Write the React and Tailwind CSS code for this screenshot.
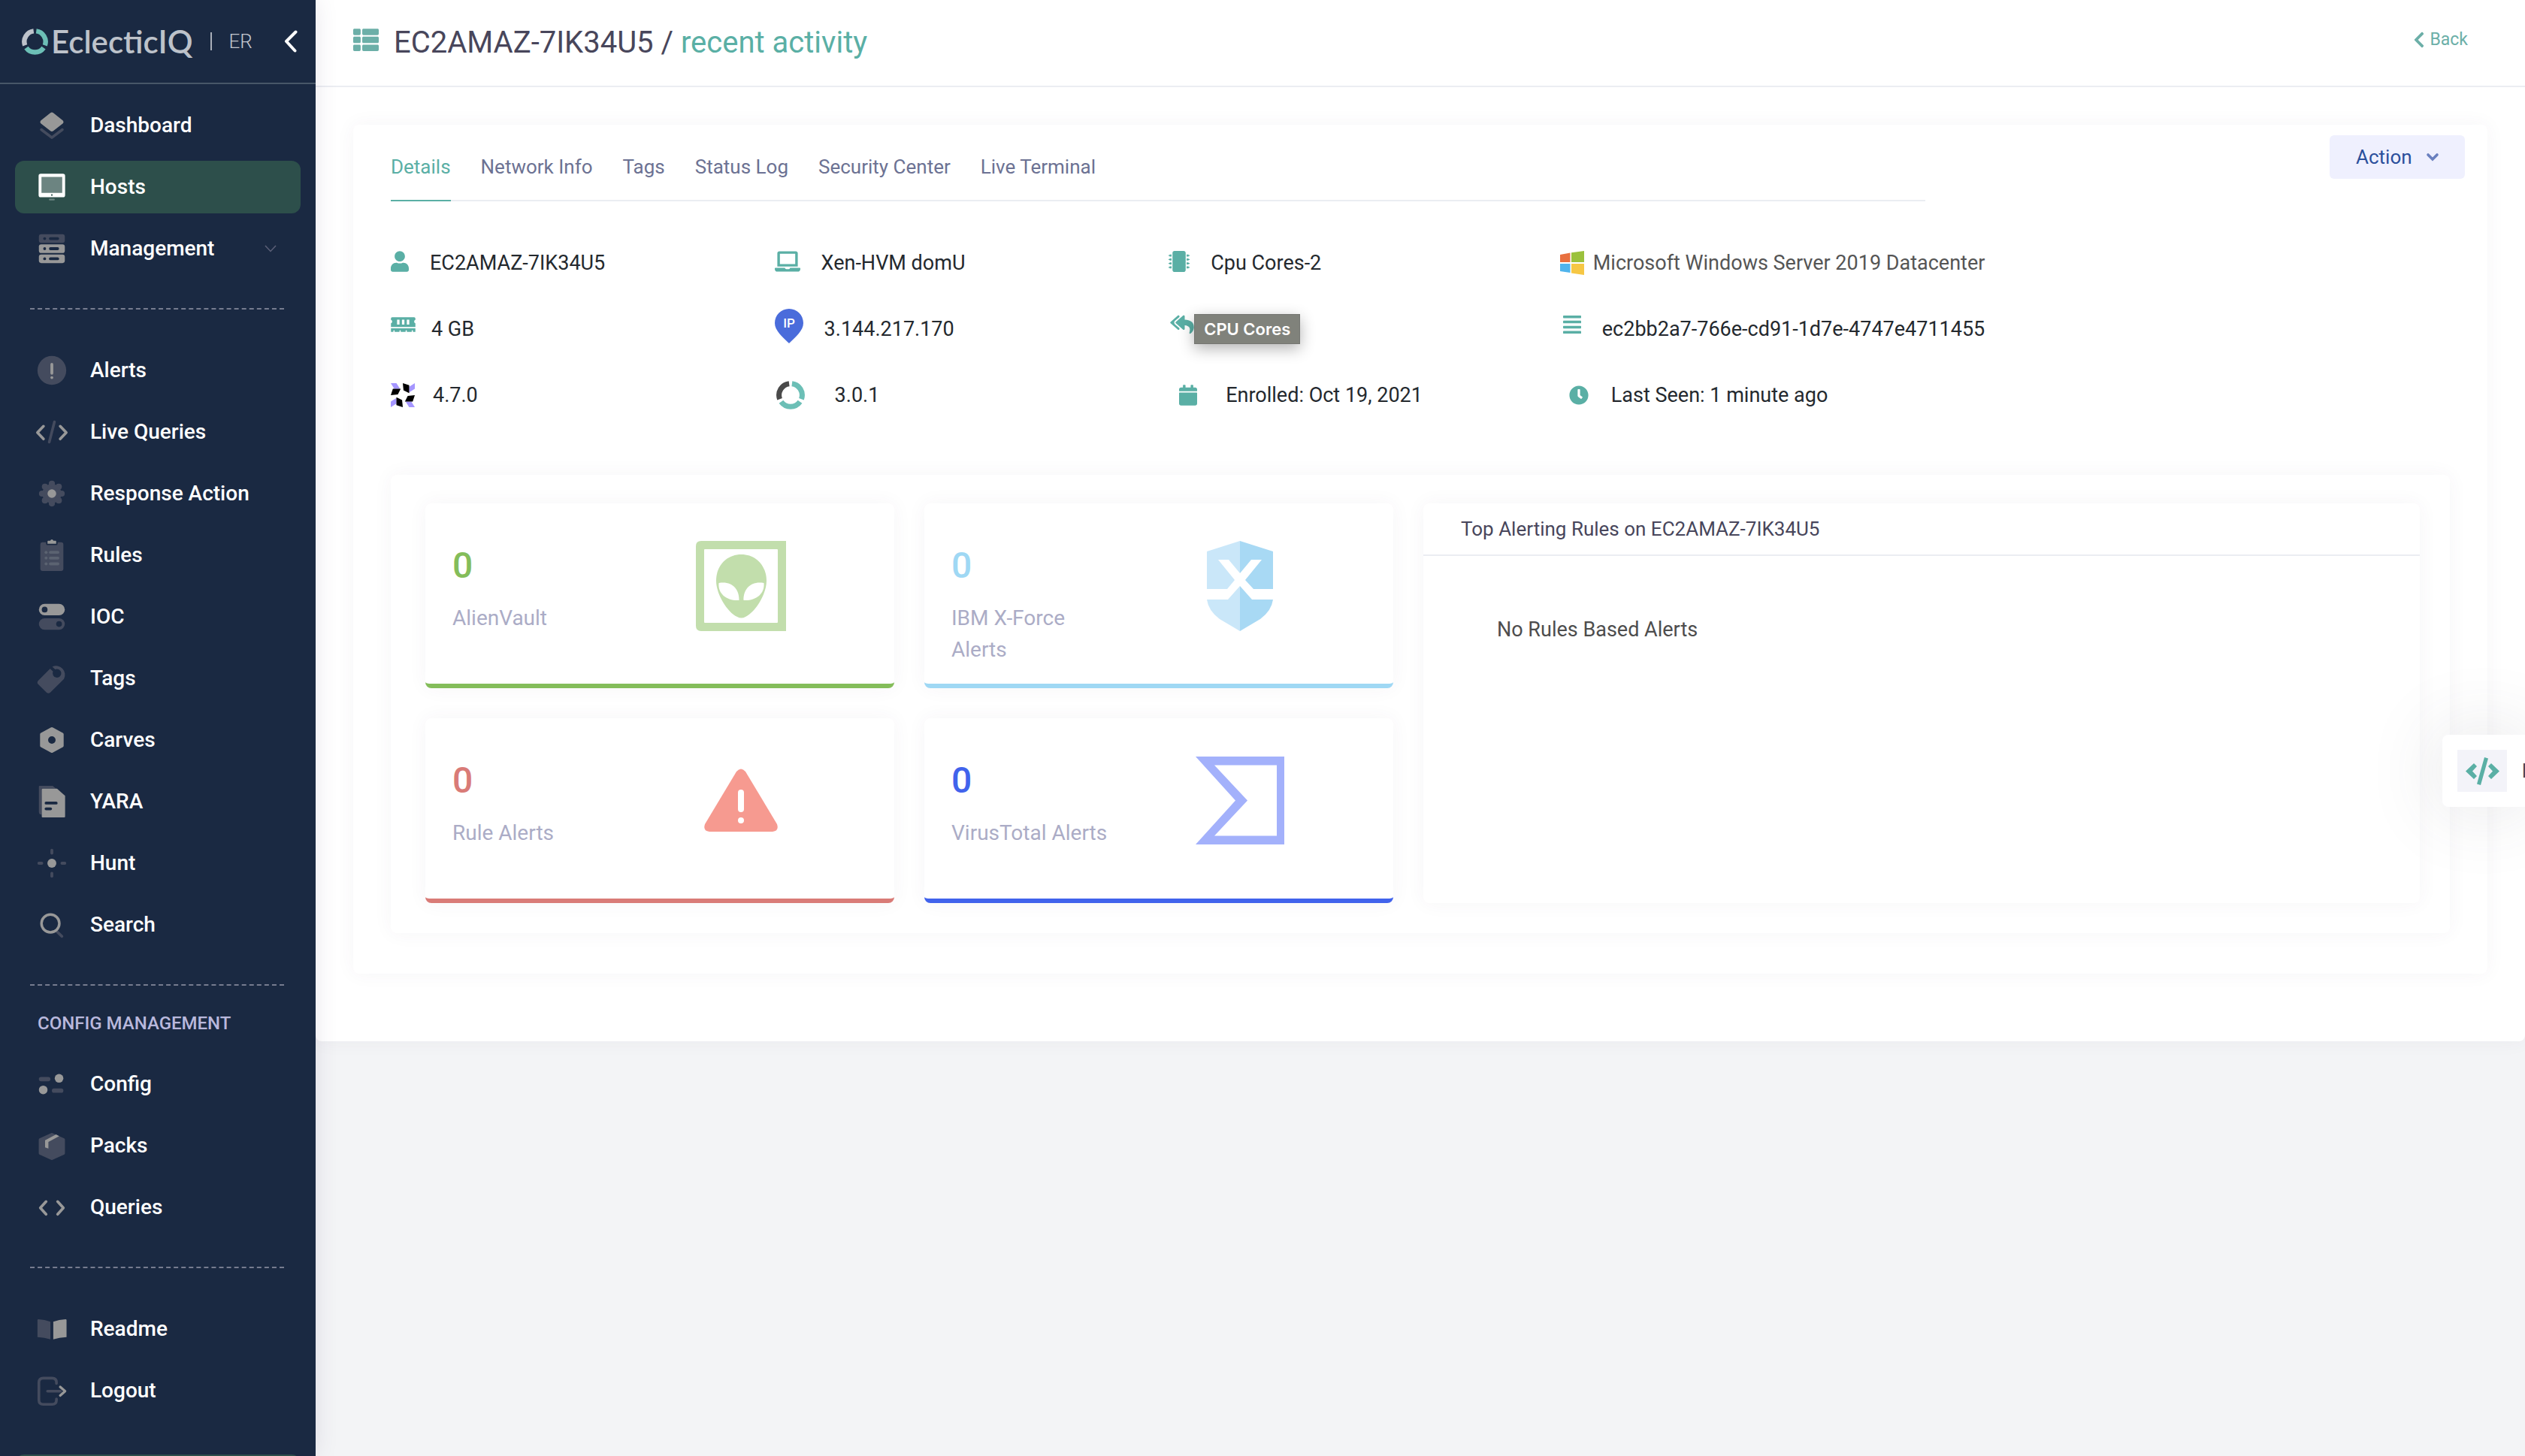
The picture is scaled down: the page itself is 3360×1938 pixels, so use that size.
import React from "react";
import {
  FaUser,
  FaLaptop,
  FaMicrochip,
  FaMemory,
  FaReplyAll,
  FaAlignJustify,
  FaCalendar,
  FaClock,
  FaThList,
  FaChevronLeft,
} from "react-icons/fa";

const G = "#989898";
const D = "#444b5e";
const BG = "#1a2942";

/* ---------- sidebar icons (24 unit grid) ---------- */
const icons = {
  dashboard: (
    <>
      <path d="M11 3.2Q12 2.5 13 3.2L19.7 8.6Q20.6 9.6 19.7 10.6L13 15.8Q12 16.6 11 15.8L4.3 10.6Q3.4 9.6 4.3 8.6Z" fill={G} />
      <path d="M4.7 14.9L12 20.4L19.3 14.9" fill="none" stroke={D} strokeWidth="1.9" strokeLinecap="round" strokeLinejoin="round" />
    </>
  ),
  hosts: (
    <>
      <rect x="3.8" y="3.8" width="16.4" height="13.2" fill="#fff" fillOpacity=".3" />
      <path fillRule="evenodd" fill="#fff" d="M4.3 2.8H19.7Q21.2 2.8 21.2 4.3V17.6Q21.2 19.1 19.7 19.1H4.3Q2.8 19.1 2.8 17.6V4.3Q2.8 2.8 4.3 2.8ZM4.8 4.9V16.1H19.2V4.9Z" />
      <circle cx="12" cy="17.5" r=".6" fill="#2d4f4b" />
      <rect x="10" y="20.1" width="4" height="1.1" rx=".5" fill="#fff" fillOpacity=".3" />
    </>
  ),
  management: (
    <>
      {[2, 9, 16].map((y, i) => (
        <g key={y}>
          <rect x="3" y={y} width="18" height="6" rx="1.6" fill={i ? G : D} />
          <circle cx="7" cy={y + 3} r="1" fill={BG} />
          <rect x="10" y={y + 2} width="7" height="2" rx="1" fill={BG} />
        </g>
      ))}
    </>
  ),
  alerts: (
    <>
      <circle cx="12" cy="12" r="10" fill={D} />
      <rect x="11" y="6.8" width="2" height="8.2" rx="1" fill={G} />
      <rect x="11" y="16" width="2" height="2" rx="1" fill={G} />
    </>
  ),
  live: (
    <>
      <path d="M6.2 8L2 12.4L6.2 16.8M17.8 8L22 12.4L17.8 16.8" fill="none" stroke={G} strokeWidth="1.9" strokeLinecap="round" strokeLinejoin="round" />
      <path d="M13.8 5L10.2 19" stroke={D} strokeWidth="1.9" strokeLinecap="round" />
    </>
  ),
  response: (
    <>
      <circle cx="12" cy="12" r="6.6" fill={D} />
      {[[12, 5.2], [12, 18.8], [5.2, 12], [18.8, 12], [7.2, 7.2], [16.8, 7.2], [7.2, 16.8], [16.8, 16.8]].map(([x, y]) => (
        <circle key={x + "-" + y} cx={x} cy={y} r="2.15" fill={D} />
      ))}
      <circle cx="12" cy="12" r="3" fill={G} />
    </>
  ),
  rules: (
    <>
      <path d="M5.6 3H8V4Q8 5 9 5H15Q16 5 16 4V3H18.4Q20 3 20 4.6V21.4Q20 23 18.4 23H5.6Q4 23 4 21.4V4.6Q4 3 5.6 3Z" fill={D} />
      <path d="M9 2.4Q9 1.9 9.5 1.9H10.9Q11.2 1 12 1Q12.8 1 13.1 1.9H14.5Q15 1.9 15 2.4V4.1H9Z" fill={G} />
      {[10, 14, 18].map((y) => (
        <g key={y} fill="#5b6371">
          <circle cx="8" cy={y} r="1.05" />
          <rect x="10" y={y - 1} width="7.2" height="2" rx="1" />
        </g>
      ))}
    </>
  ),
  ioc: (
    <>
      <rect x="3" y="3" width="18" height="8" rx="4" fill={G} />
      <circle cx="7" cy="7" r="2" fill={BG} />
      <rect x="3" y="13" width="18" height="8" rx="4" fill={D} />
      <circle cx="17" cy="17" r="2" fill={BG} />
    </>
  ),
  tags: (
    <path d="M12.3 3.9A6.2 6.2 0 0 1 20.4 12.4L10.9 21.8Q9.6 22.9 8.3 21.8L2.5 16Q1.4 14.8 2.5 13.5L10.8 5.2L12.8 7.2A3 3 0 1 0 14.3 5.7Z" fill={D} />
  ),
  carves: (
    <path fillRule="evenodd" d="M11.4 3.3Q12 3 12.6 3.3L19.8 7.2Q20.2 7.5 20.2 8V16Q20.2 16.5 19.8 16.8L12.6 20.7Q12 21 11.4 20.7L4.2 16.8Q3.8 16.5 3.8 16V8Q3.8 7.5 4.2 7.2ZM12 9.4A2.6 2.6 0 1 0 12 14.6A2.6 2.6 0 1 0 12 9.4Z" fill={G} />
  ),
  yara: (
    <>
      <path d="M3 1.6Q3 1 3.6 1H12.6L15 3H5V21Q3 21 3 19Z" fill={D} />
      <path d="M5 3.6Q5 3 5.6 3H15.6L21.2 7.9V22.4Q21.2 23 20.6 23H5.6Q5 23 5 22.4Z" fill={G} />
      <rect x="7" y="12" width="9" height="2" rx="1" fill={BG} />
      <rect x="7" y="16" width="5.1" height="2" rx="1" fill={BG} />
    </>
  ),
  hunt: (
    <>
      <circle cx="12" cy="12" r="3.1" fill={G} />
      <g fill={D}>
        <rect x="11" y="2" width="2" height="4" rx="1" />
        <rect x="11" y="18" width="2" height="4" rx="1" />
        <rect x="2" y="11" width="4" height="2" rx="1" />
        <rect x="18" y="11" width="4" height="2" rx="1" />
      </g>
    </>
  ),
  search: (
    <>
      <path d="M15.6 16.8L19 20" stroke={D} strokeWidth="1.9" strokeLinecap="round" />
      <circle cx="11" cy="11" r="6.2" fill="none" stroke={G} strokeWidth="1.8" />
    </>
  ),
  config: (
    <>
      <circle cx="17" cy="8" r="3" fill={G} />
      <circle cx="6" cy="16" r="3" fill={G} />
      <rect x="3" y="7" width="8" height="3" rx="1.5" fill={D} />
      <rect x="12" y="15" width="8" height="3" rx="1.5" fill={D} />
    </>
  ),
  packs: (
    <>
      <path d="M11.5 3.2Q12 3 12.5 3.2L20.6 6.9Q21.1 7.2 21.1 7.8V17.2Q21.1 17.8 20.6 18.1L12.5 21.8Q12 22 11.5 21.8L3.4 18.1Q2.9 17.8 2.9 17.2V7.8Q2.9 7.2 3.4 6.9Z" fill={D} />
      <path d="M14.9 4.2L7.3 8.2V13.2L9.6 13.9V9.4L17.1 5.3Z" fill={G} />
    </>
  ),
  queries: (
    <path d="M8 8L4 12.4L8 16.8M16 8L20 12.4L16 16.8" fill="none" stroke={G} strokeWidth="1.9" strokeLinecap="round" strokeLinejoin="round" />
  ),
  readme: (
    <>
      <path d="M2 5.8Q2 5.2 2.7 5.2Q7 5.4 11 6.9V19.2Q7 17.8 2 17.6Z" fill={D} />
      <path d="M22.2 5.8Q22.2 5.2 21.5 5.2Q17 5.4 13 6.9V19.2Q17 17.8 22.2 17.6Z" fill={G} />
    </>
  ),
  logout: (
    <>
      <path d="M15.2 7V6.3Q15.2 3.3 12.2 3.3H6Q3 3.3 3 6.3V18.5Q3 21.5 6 21.5H12.2Q15.2 21.5 15.2 18.5V17.8M9 12.4H18" fill="none" stroke={D} strokeWidth="1.9" strokeLinecap="round" />
      <path d="M17.8 9.4L21.2 12.4L17.8 15.4" fill="none" stroke={G} strokeWidth="1.7" strokeLinecap="round" strokeLinejoin="round" />
    </>
  ),
};

function NavItem({ icon, label, active, chevron }) {
  return (
    <li>
      <a
        href="#"
        className={
          "mx-5 flex h-[70px] items-center gap-7 rounded-xl pl-[26px] pr-8 text-[28px] font-medium leading-10 text-white " +
          (active ? "bg-[#2d4f4b]" : "")
        }
      >
        <svg viewBox="0 0 24 24" className="size-[46px] shrink-0" aria-hidden="true">
          {icons[icon]}
        </svg>
        <span className="flex-1">{label}</span>
        {chevron && (
          <svg viewBox="0 0 16 10" className="h-[10px] w-4" aria-hidden="true">
            <path d="M1 1L8 8.5L15 1" fill="none" stroke="#5c6078" strokeWidth="1.5" />
          </svg>
        )}
      </a>
    </li>
  );
}

function Divider() {
  return <div className="ml-10 mr-[42px] mt-11 border-t-2 border-dashed border-[#767c8f]" />;
}

function Ring({ className, dark }) {
  return (
    <svg viewBox="0 0 40 40" className={className} aria-hidden="true">
      <g fill="none" strokeWidth="7.4">
        <path d="M22 3.9A16.2 16.2 0 0 1 35.2 25.5" stroke="#6cbfb6" />
        <path d="M33.2 29.2A16.2 16.2 0 0 1 6.8 29.2" stroke="#6cbfb6" />
        <path d="M4.8 25.5A16.2 16.2 0 0 1 18 3.9" stroke={dark} />
      </g>
    </svg>
  );
}

function Sidebar() {
  return (
    <aside className="relative z-10 h-screen w-[420px] shrink-0 overflow-hidden bg-[#1a2942] shadow-[0_0_28px_rgba(82,63,105,0.13)]">
      <div className="flex h-28 items-center border-b-2 border-[#485768] pl-[29px] pr-6">
        <Ring className="size-[35px]" dark="#bdc2ca" />
        <span className="ml-1 font-[Lato,sans-serif] text-[42px] font-semibold leading-none text-[#bdc2ca]">EclecticIQ</span>
        <span className="ml-6 h-6 w-0.5 bg-[#a9afb9]" />
        <span className="ml-[22px] text-[26px] font-light leading-none text-[#c3c7cf]">ER</span>
        <button type="button" aria-label="Collapse menu" className="ml-auto">
          <svg viewBox="0 0 18 30" className="h-[30px] w-[18px]">
            <path d="M15.5 2.5L3 15L14.5 27.5" fill="none" stroke="#fff" strokeWidth="4" strokeLinecap="round" strokeLinejoin="round" />
          </svg>
        </button>
      </div>
      <nav>
        <ul className="mt-5 flex flex-col gap-3">
          <NavItem icon="dashboard" label="Dashboard" />
          <NavItem icon="hosts" label="Hosts" active />
          <NavItem icon="management" label="Management" chevron />
        </ul>
        <Divider />
        <ul className="mt-[46px] flex flex-col gap-3">
          <NavItem icon="alerts" label="Alerts" />
          <NavItem icon="live" label="Live Queries" />
          <NavItem icon="response" label="Response Action" />
          <NavItem icon="rules" label="Rules" />
          <NavItem icon="ioc" label="IOC" />
          <NavItem icon="tags" label="Tags" />
          <NavItem icon="carves" label="Carves" />
          <NavItem icon="yara" label="YARA" />
          <NavItem icon="hunt" label="Hunt" />
          <NavItem icon="search" label="Search" />
        </ul>
        <Divider />
        <h2 className="ml-[50px] mt-[30px] text-[24px] font-medium leading-10 text-[#b9b8dc]">CONFIG MANAGEMENT</h2>
        <ul className="mt-[26px] flex flex-col gap-3">
          <NavItem icon="config" label="Config" />
          <NavItem icon="packs" label="Packs" />
          <NavItem icon="queries" label="Queries" />
        </ul>
        <Divider />
        <ul className="mt-[46px] flex flex-col gap-3">
          <NavItem icon="readme" label="Readme" />
          <NavItem icon="logout" label="Logout" />
        </ul>
      </nav>
      <div className="mx-5 mt-[50px] h-[70px] rounded-xl bg-[#2d4f4b]" />
    </aside>
  );
}

/* ---------- host details ---------- */
function Detail({ lead, icon, children, muted }) {
  return (
    <div className="relative flex h-[88px] items-center">
      <span className={"flex shrink-0 items-center text-[#5aafa5] " + lead}>{icon}</span>
      <span className={"whitespace-nowrap " + (muted ? "text-[#555]" : "text-[#24292e]")}>{children}</span>
    </div>
  );
}

function IpPin() {
  return (
    <svg viewBox="0 0 38 46" className="h-[46px] w-[38px] shrink-0" aria-label="IP">
      <path d="M19 0C29.500 0 38 8.500 38 19C38 29 28 37 19 46C10 37 0 29 0 19C0 8.500 8.500 0 19 0Z" fill="#4a6cdb" />
      <text x="19" y="25" textAnchor="middle" fontFamily="Roboto, sans-serif" fontSize="17" fontWeight="500" fill="#fff">IP</text>
    </svg>
  );
}

function OsqueryMark() {
  const blade = (
    <>
      <path d="M0 0H8L13 8H5Z" fill="#a596ff" />
      <path d="M3 8H14L10 16L0 17Z" fill="#000" />
    </>
  );
  return (
    <svg viewBox="0 0 34 34" className="size-8 shrink-0" aria-hidden="true">
      {blade}
      <g transform="rotate(90 17 17)">{blade}</g>
      <g transform="rotate(180 17 17)">{blade}</g>
      <g transform="rotate(270 17 17)">{blade}</g>
    </svg>
  );
}

function WindowsMark() {
  return (
    <svg viewBox="0 0 32 32" className="size-8 shrink-0" aria-hidden="true">
      <path d="M0 5L13.500 2.500V15H0Z" fill="#e8703f" />
      <path d="M15 2.200L32 0V15H15Z" fill="#9bc13c" />
      <path d="M0 17H13.500V29L0 27Z" fill="#50b4ec" />
      <path d="M15 17H32V32L15 29.500Z" fill="#f6c744" />
    </svg>
  );
}

function Details() {
  return (
    <div className="mt-[38px] grid w-[74%] grid-cols-4 text-[27px] leading-10">
      <Detail lead="w-[52px] pb-1" icon={<FaUser className="h-7 w-6" />}>EC2AMAZ-7IK34U5</Detail>
      <Detail lead="w-[62px] pb-1" icon={<FaLaptop className="h-7 w-[34px]" />}>Xen-HVM domU</Detail>
      <Detail lead="w-[70px] pb-1 pl-[14px]" icon={<FaMicrochip className="size-7" />}>Cpu Cores-2</Detail>
      <Detail lead="w-[68px] pl-6" icon={<WindowsMark />} muted>Microsoft Windows Server 2019 Datacenter</Detail>

      <Detail lead="w-[54px] pb-3" icon={<FaMemory className="h-[26px] w-[33px]" />}>4 GB</Detail>
      <Detail lead="w-[66px] pb-2" icon={<IpPin />}>3.144.217.170</Detail>
      <div className="relative flex h-[88px] items-center pb-3 pl-4 text-[#5aafa5]">
        <FaReplyAll className="h-7 w-8" />
        <span
          role="tooltip"
          className="absolute left-12 top-6 border border-[#757672] bg-[#80827b] px-3 font-[Inter,sans-serif] text-[22px] font-semibold leading-[38px] text-white shadow-[0_6px_20px_rgba(0,0,0,0.3)]"
        >
          CPU Cores
        </span>
      </div>
      <Detail lead="w-20 pb-3 pl-7" icon={<FaAlignJustify className="h-7 w-6" />}>ec2bb2a7-766e-cd91-1d7e-4747e4711455</Detail>

      <Detail lead="w-14" icon={<OsqueryMark />}>4.7.0</Detail>
      <Detail lead="w-20 pl-0.5" icon={<Ring className="size-[38px]" dark="#4a4a4a" />}>3.0.1</Detail>
      <Detail lead="w-[90px] pl-7" icon={<FaCalendar className="h-7 w-6" />}>Enrolled: Oct 19, 2021</Detail>
      <Detail lead="w-[92px] pl-9" icon={<FaClock className="size-[26px]" />}>Last Seen: 1 minute ago</Detail>
    </div>
  );
}

/* ---------- alert cards ---------- */
function AlienIcon() {
  return (
    <svg viewBox="0 0 120 120" className="size-[120px]" aria-hidden="true">
      <path fillRule="evenodd" fill="#c2deac" d="M7 0H120V120H7Q0 120 0 113V7Q0 0 7 0ZM12 11Q11 11 11 12V108Q11 109 12 109H108Q109 109 109 108V12Q109 11 108 11Z" />
      <path fill="#c2deac" d="M60.500 18C80 18 94 33 94 53C94 71 79 95 66 101Q60.500 104 55 101C42 95 27 71 27 53C27 33 41 18 60.500 18Z" />
      <path fill="#fff" d="M30.500 56C48 53 58 64 57.500 79C42 80 29 71 30.500 56ZM90.500 56C73 53 63 64 63.500 79C79 80 92 71 90.500 56Z" />
    </svg>
  );
}

function XForceIcon() {
  return (
    <svg viewBox="0 0 120 120" className="size-[120px]" aria-hidden="true">
      <path d="M60 0V120L33 104Q18 93 16 78V14Z" fill="#cae7f9" />
      <path d="M60 0V120L87 104Q102 93 104 78V14Z" fill="#a8d9f4" />
      <path fill="#fff" d="M31 25H45L60 43L75 25H89L67 52L78 64H104V78H76L60 60L44 78H16V64H43L53 52Z" />
    </svg>
  );
}

function RuleIcon() {
  return (
    <svg viewBox="0 0 120 120" className="size-[120px]" aria-hidden="true">
      <path d="M54 21Q60 14 66 21L108 91Q111 100 102 101H18Q9 100 12 91Z" fill="#f69a90" />
      <rect x="56" y="45" width="8" height="30" rx="4" fill="#fff" />
      <circle cx="60" cy="86" r="4" fill="#fff" />
    </svg>
  );
}

function VirusTotalIcon() {
  return (
    <svg viewBox="0 0 120 120" className="size-[120px]" aria-hidden="true">
      <path fillRule="evenodd" fill="#a3b1fb" d="M1 1H119V118H1L54 59.500ZM26 12.500L70 59.500L26 106.500H109V12.500Z" />
    </svg>
  );
}

function StatCard({ value, label, tone, edge, icon }) {
  return (
    <div className={"flex h-[246px] rounded-lg border-b-[6px] bg-white pl-9 pt-[50px] shadow-[0_0_26px_rgba(82,63,105,0.05)] " + edge}>
      <div className="w-56 shrink-0">
        <p className={"text-[48px] font-medium leading-[66px] " + tone}>{value}</p>
        <p className="mt-4 text-[28px] leading-[42px] text-[#abacc6]">{label}</p>
      </div>
      <div className="ml-[100px]">{icon}</div>
    </div>
  );
}

function Alerts() {
  return (
    <section className="mx-[50px] mt-[62px] grid grid-cols-[1288fr_1326fr] gap-10 rounded-lg bg-white pb-10 pl-[46px] pr-10 pt-[38px] shadow-[0_0_26px_rgba(82,63,105,0.05)]">
      <div className="grid grid-cols-2 gap-10">
        <StatCard value="0" label="AlienVault" tone="text-[#84bd5a]" edge="border-[#84bd5a]" icon={<AlienIcon />} />
        <StatCard value="0" label="IBM X-Force Alerts" tone="text-[#9fd8f4]" edge="border-[#9fd8f4]" icon={<XForceIcon />} />
        <StatCard value="0" label="Rule Alerts" tone="text-[#d97b77]" edge="border-[#d97b77]" icon={<RuleIcon />} />
        <StatCard value="0" label="VirusTotal Alerts" tone="text-[#4163ec]" edge="border-[#4163ec]" icon={<VirusTotalIcon />} />
      </div>
      <div className="rounded-lg bg-white shadow-[0_0_26px_rgba(82,63,105,0.05)]">
        <h2 className="border-b-2 border-[#ebedf2] py-[14px] pl-[50px] text-[26px] leading-10 text-[#48465b]">
          Top Alerting Rules on EC2AMAZ-7IK34U5
        </h2>
        <p className="pl-[98px] pt-[78px] text-[27px] leading-10 text-[#4d4d4d]">No Rules Based Alerts</p>
      </div>
    </section>
  );
}

const tabs = ["Details", "Network Info", "Tags", "Status Log", "Security Center", "Live Terminal"];

export default function App() {
  return (
    <div className="relative flex h-screen overflow-hidden bg-[#f3f4f6] font-[Roboto,sans-serif]">
      <Sidebar />
      <main className="min-w-0 flex-1">
        <div className="rounded-b-lg bg-white pb-[90px] shadow-[0_0_26px_rgba(82,63,105,0.05)]">
          <header className="flex h-[116px] items-center border-b-2 border-[#ebedf2] pb-2 pl-[50px] pr-[76px]">
            <FaThList className="h-[34px] w-[34px] text-[#6cafa8]" />
            <h1 className="ml-5 mt-2 text-[40px] leading-[60px] text-[#48465b]">
              EC2AMAZ-7IK34U5 / <span className="text-[#5aafa5]">recent activity</span>
            </h1>
            <a href="#" className="ml-auto flex items-center gap-1.5 text-[23px] leading-10 text-[#6cafa8]">
              <FaChevronLeft className="h-6 w-4" />
              Back
            </a>
          </header>

          <div className="mx-[50px] mt-[50px] rounded-lg bg-white pb-[54px] shadow-[0_0_26px_rgba(82,63,105,0.05)]">
            <div className="flex items-start justify-between pl-[50px] pr-[30px]">
              <nav className="mt-9 flex w-[74%] gap-10 border-b-2 border-[#ebedf2] text-[26px] leading-10 text-[#6c7293]">
                {tabs.map((t, i) => (
                  <a
                    key={t}
                    href="#"
                    className={i === 0 ? "-mb-0.5 border-b-2 border-[#5aafa5] pb-6 text-[#5aafa5]" : "pb-6"}
                  >
                    {t}
                  </a>
                ))}
              </nav>
              <button
                type="button"
                className="mt-[14px] flex h-[58px] w-[180px] items-center justify-between rounded-md bg-[#eff0fe] pl-[35px] pr-[34px] text-[26px] text-[#2a4f9c]"
              >
                Action
                <svg viewBox="0 0 18 12" className="h-3 w-[18px]" aria-hidden="true">
                  <path d="M3 3L9 9L15 3" fill="none" stroke="#6a80bf" strokeWidth="3.600" strokeLinecap="round" />
                </svg>
              </button>
            </div>
            <div className="pl-[50px] pr-[30px]">
              <Details />
            </div>
            <Alerts />
          </div>
        </div>
      </main>

      <button
        type="button"
        className="absolute right-0 top-[978px] flex h-24 w-[110px] items-center gap-5 overflow-hidden rounded-l-lg bg-white pl-5 text-[26px] font-medium text-[#48465b] shadow-[0_0_100px_rgba(69,65,78,0.15)]"
      >
        <span className="flex h-14 w-[66px] shrink-0 items-center justify-center bg-[#f3f3f9]">
          <svg viewBox="0 0 45 37" className="h-[37px] w-[45px]" aria-hidden="true">
            <path d="M11 8L15 12L9 18.500L15 25L11 29L0 18.500ZM34 8L30 12L36 18.500L30 25L34 29L45 18.500ZM25 0L30 1.500L20 37L15 35.500Z" fill="#5aafa5" />
          </svg>
        </span>
        L
      </button>
    </div>
  );
}
